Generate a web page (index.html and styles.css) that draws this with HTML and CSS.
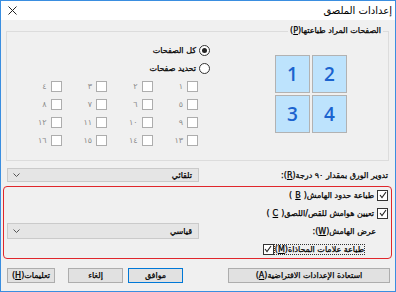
FILE: index.html
```html
<!DOCTYPE html>
<html lang="ar" dir="rtl">
<head>
    <meta charset="UTF-8">
    <title>إعدادات الملصق</title>
    <link rel="stylesheet" href="styles.css">
</head>
<body>
    <div class="window">
        <div class="titlebar">
            <span class="title">إعدادات الملصق</span>
            <svg class="close" width="9" height="9" viewBox="0 0 9 9">
                <path d="M0.5 0.5 L8.5 8.5 M8.5 0.5 L0.5 8.5" stroke="#222" stroke-width="1" fill="none"/>
            </svg>
        </div>

        <div class="content">
            <fieldset class="group">
                <legend>الصفحات المراد طباعتها(<u>P</u>)</legend>
                <div class="group-inner">
                    <div class="preview">
                        <div class="tile">1</div>
                        <div class="tile">2</div>
                        <div class="tile">3</div>
                        <div class="tile">4</div>
                    </div>
                    <div class="select">
                        <div class="opt"><span class="radio on"></span>كل الصفحات</div>
                        <div class="opt"><span class="radio"></span>تحديد صفحات</div>
                        <div class="pages">
                            <div class="page"><span class="box"></span>١</div>
                            <div class="page"><span class="box"></span>٢</div>
                            <div class="page"><span class="box"></span>٣</div>
                            <div class="page"><span class="box"></span>٤</div>
                            <div class="page"><span class="box"></span>٥</div>
                            <div class="page"><span class="box"></span>٦</div>
                            <div class="page"><span class="box"></span>٧</div>
                            <div class="page"><span class="box"></span>٨</div>
                            <div class="page"><span class="box"></span>٩</div>
                            <div class="page"><span class="box"></span>١٠</div>
                            <div class="page"><span class="box"></span>١١</div>
                            <div class="page"><span class="box"></span>١٢</div>
                            <div class="page"><span class="box"></span>١٣</div>
                            <div class="page"><span class="box"></span>١٤</div>
                            <div class="page"><span class="box"></span>١٥</div>
                            <div class="page"><span class="box"></span>١٦</div>
                        </div>
                    </div>
                </div>
            </fieldset>

            <div class="row rotate">
                <span>تدوير الورق بمقدار ٩٠ درجة(<u>R</u>):</span>
                <div class="combo">
                    <span>تلقائي</span>
                    <svg width="7" height="4" viewBox="0 0 7 4"><path d="M0.5 0.5 L3.5 3.5 L6.5 0.5" stroke="#555" fill="none"/></svg>
                </div>
            </div>

            <div class="margins">
                <div class="check-row"><span class="box on"><svg width="8" height="8" viewBox="0 0 8 8"><path d="M1 4 L3 6.5 L7 1" stroke="#222" stroke-width="1.1" fill="none"/></svg></span>طباعة حدود الهامش(<u>B</u>)</div>
                <div class="check-row"><span class="box on"><svg width="8" height="8" viewBox="0 0 8 8"><path d="M1 4 L3 6.5 L7 1" stroke="#222" stroke-width="1.1" fill="none"/></svg></span>تعيين هوامش للقص/اللصق(<u>C</u>)</div>
                <div class="row width-row">
                    <span class="indent">عرض الهامش(<u>W</u>):</span>
                    <div class="combo">
                        <span>قياسي</span>
                        <svg width="7" height="4" viewBox="0 0 7 4"><path d="M0.5 0.5 L3.5 3.5 L6.5 0.5" stroke="#555" fill="none"/></svg>
                    </div>
                </div>
                <div class="check-row marks"><span class="focus">طباعة علامات المحاذاة(<u>M</u>)</span><span class="box on"><svg width="8" height="8" viewBox="0 0 8 8"><path d="M1 4 L3 6.5 L7 1" stroke="#222" stroke-width="1.1" fill="none"/></svg></span></div>
            </div>

            <div class="buttons">
                <button class="btn restore">استعادة الإعدادات الافتراضية(<u>A</u>)</button>
                <div class="btn-group">
                    <button class="btn default">موافق</button>
                    <button class="btn">إلغاء</button>
                    <button class="btn help">تعليمات(<u>H</u>)</button>
                </div>
            </div>
        </div>
    </div>
</body>
</html>
```

FILE: styles.css
```css
body {
    margin: 0;
    font-family: "DejaVu Sans", sans-serif;
    font-size: 8px;
    color: #000;
}
.window {
    width: 396px;
    height: 292px;
    box-sizing: border-box;
    border: 1px solid #3a8ee0;
    background: #f0f0f0;
    direction: rtl;
}
.titlebar {
    height: 19px;
    background: #fff;
    display: flex;
    justify-content: space-between;
    align-items: center;
    padding: 0 3px 0 7px;
}
.title {
    font-size: 10px;
}
.content {
    padding: 5px 6px 0 5px;
}
.group {
    margin: 0;
    padding: 0;
    min-width: 0;
    border: 1px solid #dcdcdc;
}
.group legend {
    padding: 0 2px;
    margin-right: 5px;
    line-height: 12px;
    -webkit-text-stroke: 0.25px #000;
}
.group-inner {
    display: flex;
    align-items: flex-start;
    height: 123px;
}
.preview {
    display: grid;
    grid-template-columns: 35px 35px;
    grid-auto-rows: 38px;
    gap: 2px;
    direction: ltr;
    margin: 18px 41px 0 0;
}
.tile {
    box-sizing: border-box;
    border: 1px solid #b2b2b2;
    background: #bde3fd;
    color: #1b63cf;
    font-family: "Open Sans", sans-serif;
    font-size: 19px;
    font-weight: 600;
    display: flex;
    align-items: center;
    justify-content: center;
}
.select {
    margin: 4px 65px 0 0;
}
.opt {
    height: 18px;
    display: flex;
    align-items: center;
    gap: 3px;
    -webkit-text-stroke: 0.25px #000;
}
.radio {
    width: 9px;
    height: 9px;
    border: 1px solid #333;
    border-radius: 50%;
    background: #fff;
    display: flex;
    align-items: center;
    justify-content: center;
}
.radio.on::after {
    content: "";
    width: 5px;
    height: 5px;
    border-radius: 50%;
    background: #222;
}
.pages {
    display: grid;
    grid-template-columns: repeat(4, 45.5px);
    grid-auto-rows: 18px;
    margin-right: 12px;
    color: #8a8a8a;
}
.page {
    display: flex;
    align-items: center;
    gap: 4px;
}
.box {
    width: 9px;
    height: 9px;
    border: 1px solid #adadad;
    background: #fff;
    display: flex;
    align-items: center;
    justify-content: center;
    flex: none;
}
.box.on {
    border-color: #333;
}
.row {
    display: flex;
    justify-content: space-between;
    align-items: center;
}
.row > span,
.check-row,
.combo span {
    -webkit-text-stroke: 0.25px #000;
}
.rotate {
    height: 16px;
    margin-top: 6px;
    padding: 0 1px;
}
.combo {
    width: 192px;
    height: 14px;
    box-sizing: border-box;
    border: 1px solid #cacaca;
    background: #e5e5e5;
    display: flex;
    justify-content: space-between;
    align-items: center;
    padding: 0 6px 0 5px;
}
.margins {
    margin: 3px -3px 0;
    height: 71px;
    border: 1px solid #e0262b;
    border-radius: 4px;
    padding: 0 3px;
}
.check-row {
    height: 18px;
    display: flex;
    align-items: center;
    gap: 3px;
}
.margins .check-row:first-child {
    height: 16px;
    margin-bottom: 1px;
}
.width-row {
    height: 18px;
}
.width-row .combo {
    height: 16px;
}
.indent {
    margin-right: 12px;
}
.marks {
    margin-right: 24px;
    gap: 1px;
}
.focus {
    outline: 1px dotted #333;
    outline-offset: 0;
}
.buttons {
    display: flex;
    justify-content: space-between;
    margin: 9px -1px 0 1px;
}
.btn-group {
    display: flex;
    gap: 5px;
}
.btn {
    height: 15px;
    width: 55px;
    padding: 0;
    border: 1px solid #adadad;
    background: #e1e1e1;
    font-family: "DejaVu Sans", sans-serif;
    font-size: 8px;
    color: #000;
    -webkit-text-stroke: 0.25px #000;
}
.btn.default {
    border-color: #0078d7;
}
.btn.restore {
    width: 162px;
}
.btn.help {
    width: 48px;
    margin-right: 8px;
}
```
